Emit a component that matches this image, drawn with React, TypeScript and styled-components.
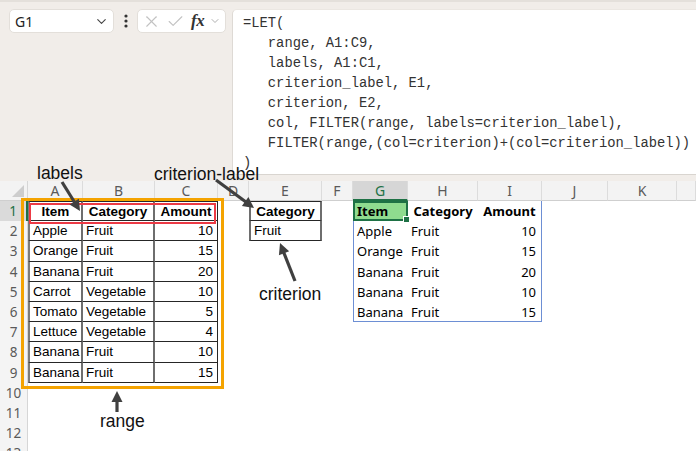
import React from 'react';
import styled, { createGlobalStyle } from 'styled-components';
import { X, Check, ChevronDown } from 'lucide-react';

const GlobalStyle = createGlobalStyle`
  html, body { margin: 0; padding: 0; background: #fff; }
  body { width: 696px; height: 451px; overflow: hidden; font-family: "Liberation Sans", Arial, sans-serif; }
`;

const Page = styled.div`
  position: relative;
  width: 696px;
  height: 451px;
  overflow: hidden;
  background: #fff;
`;

const TopBar = styled.div`
  height: 181px;
  box-sizing: border-box;
  background: #f1ede9;
  border-top: 2px solid #e4e0db;
  display: flex;
  align-items: flex-start;
  padding: 7px 0 0 9px;
`;

const NameBox = styled.div`
  width: 105px;
  height: 24px;
  box-sizing: border-box;
  background: #fff;
  border: 1px solid #e3dfda;
  border-radius: 5px;
  display: flex;
  align-items: center;
  justify-content: space-between;
  padding: 0 4px 0 5px;
  font-family: "Noto Sans", sans-serif;
  font-size: 14px;
  color: #222;
`;

const Dots = styled.div`
  width: 23px;
  height: 24px;
  display: flex;
  align-items: center;
  justify-content: center;
`;

const FxBox = styled.div`
  width: 89px;
  height: 24px;
  box-sizing: border-box;
  background: #fff;
  border: 1px solid #e3dfda;
  border-radius: 5px;
  display: flex;
  align-items: center;
  padding: 0 0 0 4px;
  gap: 5px;
`;

const FxGlyph = styled.span`
  font-family: "Liberation Serif", "DejaVu Serif", serif;
  font-style: italic;
  font-weight: bold;
  font-size: 17px;
  color: #333;
  margin-left: 1px;
  letter-spacing: -0.5px;
`;

const FormulaBox = styled.div`
  flex: 1;
  margin-left: 6px;
  height: 166px;
  box-sizing: border-box;
  background: #fff;
  border-left: 1px solid #dedad5;
  border-bottom: 1px solid #d9d5d0;
  border-top: 1px solid #ebe7e2;
  border-radius: 5px 0 0 5px;
  padding: 4px 0 0 10px;
  font-family: "Liberation Mono", "DejaVu Sans Mono", monospace;
  font-size: 13.8px;
  line-height: 20px;
  color: #333;
  white-space: pre;
  overflow: hidden;
`;

// row header + A..K widths; L takes the rest
const COLS = [28, 55, 72, 63, 31, 73, 31, 55, 70, 64, 66, 69];
const LETTERS = ['A', 'B', 'C', 'D', 'E', 'F', 'G', 'H', 'I', 'J', 'K', 'L'];

const Sheet = styled.div`
  display: grid;
  grid-template-columns: ${COLS.map(w => w + 'px').join(' ')} 1fr;
  grid-template-rows: 20px;
  grid-auto-rows: 20.2px;
  height: 270px;
  overflow: hidden;
`;

const Corner = styled.div`
  position: relative;
  background: #f3f3f3;
  border-right: 1px solid #d6d6d6;
  border-bottom: 1px solid #cfcfcf;
  box-sizing: border-box;
  &::after {
    content: '';
    position: absolute;
    right: 3px;
    bottom: 3px;
    width: 0;
    height: 0;
    border-left: 12px solid transparent;
    border-bottom: 12px solid #cdcdcd;
  }
`;

const ColHead = styled.div<{ $active?: boolean }>`
  box-sizing: border-box;
  background: ${p => (p.$active ? '#d6d6d6' : '#f3f3f3')};
  border-right: 1px solid #dcdcdc;
  border-bottom: ${p => (p.$active ? '2px solid #1e7145' : '1px solid #cfcfcf')};
  display: flex;
  align-items: center;
  justify-content: center;
  font-family: "Noto Sans", sans-serif;
  font-size: 14px;
  color: ${p => (p.$active ? '#1e7145' : '#5a5a5a')};
`;

const RowHead = styled.div<{ $active?: boolean }>`
  box-sizing: border-box;
  background: ${p => (p.$active ? '#dadada' : '#f4f4f4')};
  border-right: ${p => (p.$active ? '2px solid #1e7145' : '1px solid #d6d6d6')};
  display: flex;
  align-items: center;
  justify-content: center;
  font-family: "Noto Sans", sans-serif;
  font-size: 13.5px;
  color: ${p => (p.$active ? '#1e7145' : '#5a5a5a')};
`;

type Align = 'left' | 'center' | 'right';

interface CellStyle {
  $align?: Align;
  $bold?: boolean;
  $font?: 'arial' | 'aptos';
  $bt?: string;
  $bb?: string;
  $bl?: string;
  $br?: string;
  $fill?: string;
  $sel?: boolean;
  $pad?: number;
}

const Cell = styled.div<CellStyle>`
  position: relative;
  box-sizing: border-box;
  white-space: nowrap;
  display: flex;
  align-items: center;
  padding: 0 ${p => p.$pad ?? 3}px;
  justify-content: ${p => (p.$align === 'right' ? 'flex-end' : p.$align === 'center' ? 'center' : 'flex-start')};
  font-family: ${p => (p.$font === 'aptos' ? '"Noto Sans", sans-serif' : '"Liberation Sans", Arial, sans-serif')};
  font-size: ${p => (p.$font === 'aptos' ? '13px' : '13.5px')};
  font-weight: ${p => (p.$bold ? 'bold' : 'normal')};
  color: #000;
  background: ${p => p.$fill || 'transparent'};
  border-top: ${p => p.$bt || 'none'};
  border-bottom: ${p => p.$bb || 'none'};
  border-left: ${p => p.$bl || 'none'};
  border-right: ${p => p.$br || 'none'};
  ${p =>
    p.$sel
      ? `
    &::after {
      content: '';
      position: absolute;
      right: -4px;
      bottom: -4px;
      width: 5px;
      height: 5px;
      background: #1e7145;
      border: 1px solid #fff;
      z-index: 2;
    }
  `
      : ''}
`;

const Frame = styled.div<{ $color: string; $w: number; $x: number; $y: number; $width: number; $height: number }>`
  position: absolute;
  left: ${p => p.$x}px;
  top: ${p => p.$y}px;
  width: ${p => p.$width}px;
  height: ${p => p.$height}px;
  box-sizing: border-box;
  border: ${p => p.$w}px solid ${p => p.$color};
  pointer-events: none;
  z-index: 3;
`;

const Note = styled.div<{ $x: number; $y: number }>`
  position: absolute;
  left: ${p => p.$x}px;
  top: ${p => p.$y}px;
  font-family: "Liberation Sans", Arial, sans-serif;
  font-size: 17.5px;
  line-height: 20px;
  color: #111;
  white-space: nowrap;
  z-index: 4;
`;

const ArrowLayer = styled.svg`
  position: absolute;
  left: 0;
  top: 0;
  width: 696px;
  height: 451px;
  pointer-events: none;
  z-index: 5;
`;

function Arrow({ x1, y1, x2, y2 }: { x1: number; y1: number; x2: number; y2: number }) {
  const dx = x2 - x1;
  const dy = y2 - y1;
  const len = Math.hypot(dx, dy);
  const ux = dx / len;
  const uy = dy / len;
  const hl = 11;
  const hw = 5.5;
  const bx = x2 - ux * hl;
  const by = y2 - uy * hl;
  const px = -uy;
  const py = ux;
  return (
    <g>
      <line x1={x1} y1={y1} x2={bx + ux * 1} y2={by + uy * 1} stroke="#404040" strokeWidth={3.2} />
      <polygon
        points={`${x2},${y2} ${bx + px * hw},${by + py * hw} ${bx - px * hw},${by - py * hw}`}
        fill="#404040"
      />
    </g>
  );
}

interface CellData extends CellStyle {
  text?: string | number;
}

const DARK = '1px solid #262626';
const GRAY = '2px solid #6e6e6e';
const BLUE = '1px solid #6d8fd4';

function buildCells(): Record<string, CellData> {
  const cells: Record<string, CellData> = {};
  const src: (string | number)[][] = [
    ['Item', 'Category', 'Amount'],
    ['Apple', 'Fruit', 10],
    ['Orange', 'Fruit', 15],
    ['Banana', 'Fruit', 20],
    ['Carrot', 'Vegetable', 10],
    ['Tomato', 'Vegetable', 5],
    ['Lettuce', 'Vegetable', 4],
    ['Banana', 'Fruit', 10],
    ['Banana', 'Fruit', 15],
  ];
  src.forEach((row, r) => {
    row.forEach((v, c) => {
      const key = LETTERS[c] + (r + 1);
      cells[key] = {
        text: v,
        $bold: r === 0,
        $align: r === 0 ? 'center' : typeof v === 'number' ? 'right' : 'left',
        $bt: r === 0 ? DARK : undefined,
        $bb: DARK,
        $bl: c === 0 ? '2px solid #7c7c7c' : undefined,
        $br: c === 2 ? DARK : GRAY,
        $pad: typeof v === 'number' ? 4 : 3,
      };
    });
  });
  cells['E1'] = { text: 'Category', $bold: true, $align: 'center', $bt: DARK, $bb: DARK, $bl: GRAY, $br: GRAY };
  cells['E2'] = { text: 'Fruit', $align: 'left', $bb: DARK, $bl: GRAY, $br: GRAY };

  const res: (string | number)[][] = [
    ['Item', 'Category', 'Amount'],
    ['Apple', 'Fruit', 10],
    ['Orange', 'Fruit', 15],
    ['Banana', 'Fruit', 20],
    ['Banana', 'Fruit', 10],
    ['Banana', 'Fruit', 15],
  ];
  res.forEach((row, r) => {
    row.forEach((v, c) => {
      const key = LETTERS[c + 6] + (r + 1);
      const d: CellData = {
        text: v,
        $font: 'aptos',
        $bold: r === 0,
        $align: r === 0 ? (c === 0 ? 'left' : 'center') : typeof v === 'number' ? 'right' : 'left',
        $bl: c === 0 ? BLUE : undefined,
        $br: c === 2 ? BLUE : undefined,
        $bb: r === res.length - 1 ? BLUE : undefined,
        $pad: c === 0 ? 3 : typeof v === 'number' ? 5 : 3,
      };
      if (key === 'G1') {
        d.$fill = '#8fdb8f';
        d.$bt = '2px solid #1e7145';
        d.$bb = '2px solid #1e7145';
        d.$bl = '2px solid #1e7145';
        d.$br = '2px solid #1e7145';
        d.$sel = true;
        d.$pad = 2;
      }
      cells[key] = d;
    });
  });
  return cells;
}

const CELLS = buildCells();
const ROWS = 13;

const FORMULA = `=LET(
   range, A1:C9,
   labels, A1:C1,
   criterion_label, E1,
   criterion, E2,
   col, FILTER(range, labels=criterion_label),
   FILTER(range,(col=criterion)+(col=criterion_label))
)`;

function VDots() {
  return (
    <svg width="6" height="16" viewBox="0 0 6 16">
      <circle cx="3" cy="3" r="1.6" fill="#333" />
      <circle cx="3" cy="8" r="1.6" fill="#333" />
      <circle cx="3" cy="13" r="1.6" fill="#333" />
    </svg>
  );
}

export default function App() {
  const gridItems: React.ReactNode[] = [];
  gridItems.push(<Corner key="corner" />);
  LETTERS.forEach(l =>
    gridItems.push(
      <ColHead key={'h' + l} $active={l === 'G'}>
        {l === 'L' ? '' : l}
      </ColHead>
    )
  );
  for (let r = 1; r <= ROWS; r++) {
    gridItems.push(
      <RowHead key={'r' + r} $active={r === 1}>
        {r}
      </RowHead>
    );
    LETTERS.forEach(l => {
      const key = l + r;
      const d = CELLS[key];
      if (d) {
        const { text, ...style } = d;
        gridItems.push(
          <Cell key={key} {...style}>
            {text}
          </Cell>
        );
      } else {
        gridItems.push(<Cell key={key} />);
      }
    });
  }

  return (
    <Page>
      <GlobalStyle />
      <TopBar>
        <NameBox>
          <span>G1</span>
          <ChevronDown size={15} color="#444" strokeWidth={1.8} />
        </NameBox>
        <Dots>
          <VDots />
        </Dots>
        <FxBox>
          <X size={19} color="#c2c2c2" strokeWidth={1.4} />
          <Check size={19} color="#c2c2c2" strokeWidth={1.4} />
          <FxGlyph>fx</FxGlyph>
          <ChevronDown size={12} color="#9a9a9a" strokeWidth={1.6} />
        </FxBox>
        <FormulaBox>{FORMULA}</FormulaBox>
      </TopBar>
      <Sheet>{gridItems}</Sheet>

      <Frame $color="#f4a300" $w={3} $x={21} $y={198} $width={203} $height={191} />
      <Frame $color="#ec3a45" $w={2} $x={29} $y={203} $width={187} $height={21} />

      <Note $x={37} $y={163}>labels</Note>
      <Note $x={154} $y={164}>criterion-label</Note>
      <Note $x={259} $y={284}>criterion</Note>
      <Note $x={100} $y={411}>range</Note>

      <ArrowLayer viewBox="0 0 696 451">
        <Arrow x1={62} y1={182} x2={80} y2={211} />
        <Arrow x1={216} y1={180} x2={254} y2={208} />
        <Arrow x1={295} y1={281} x2={280} y2={243} />
        <Arrow x1={117} y1={412} x2={117} y2={391} />
      </ArrowLayer>
    </Page>
  );
}
